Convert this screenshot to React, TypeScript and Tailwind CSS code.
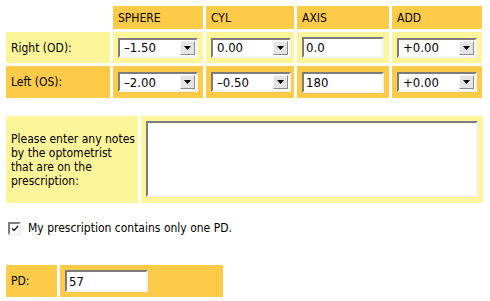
import React, { useState } from 'react';

const font = "font-['DejaVu_Sans_Condensed','DejaVu_Sans',sans-serif]";

function FakeSelect({ value }: { value: string }) {
  return (
    <div className="flex h-[20px] w-[80px] items-center border-2 border-t-[#7c7c7c] border-l-[#7c7c7c] border-b-[#f2f2f2] border-r-[#f2f2f2] bg-white">
      <span className="flex-1 pl-[4px] text-[13px] leading-none text-black">{value}</span>
      <span className="mr-[1px] flex h-[14px] w-[15px] items-center justify-center border border-t-[#f4f4f4] border-l-[#f4f4f4] border-b-[#8a8a8a] border-r-[#8a8a8a] bg-[#e4e4e4]">
        <svg width="7" height="4" viewBox="0 0 7 4">
          <path d="M0 0h7L3.5 4z" fill="#000" />
        </svg>
      </span>
    </div>
  );
}

function FakeInput({ value, w, h = 21 }: { value: string; w: number; h?: number }) {
  return (
    <input
      defaultValue={value}
      style={{ width: w, height: h }}
      className="border-2 border-t-[#7c7c7c] border-l-[#7c7c7c] border-b-[#f2f2f2] border-r-[#f2f2f2] bg-white px-[2px] text-[13px] text-black outline-none"
    />
  );
}

export default function App() {
  const [onePd, setOnePd] = useState(true);
  const heads = ['SPHERE', 'CYL', 'AXIS', 'ADD'];

  return (
    <div className={`${font} min-h-[301px] w-[490px] bg-white pl-[6px] pt-[6px] text-[12px] text-black`}>
      <div className="grid grid-cols-[104px_90px_88px_92px_90px] grid-rows-[23px_31px_32px] gap-[3px]">
        <div />
        {heads.map(h => (
          <div key={h} className="flex items-center bg-[#fecb48] pl-[5px]">{h}</div>
        ))}

        <div className="flex items-center bg-[#fcf59a] pl-[5px]">Right (OD):</div>
        <div className="flex items-center bg-[#fcf59a] pl-[5px]"><FakeSelect value="–1.50" /></div>
        <div className="flex items-center bg-[#fcf59a] pl-[5px]"><FakeSelect value="0.00" /></div>
        <div className="flex items-center bg-[#fcf59a] pl-[5px]"><FakeInput value="0.0" w={82} /></div>
        <div className="flex items-center bg-[#fcf59a] pl-[5px]"><FakeSelect value="+0.00" /></div>

        <div className="flex items-center bg-[#fecb48] pl-[5px]">Left (OS):</div>
        <div className="flex items-center bg-[#fecb48] pl-[5px]"><FakeSelect value="–2.00" /></div>
        <div className="flex items-center bg-[#fecb48] pl-[5px]"><FakeSelect value="–0.50" /></div>
        <div className="flex items-center bg-[#fecb48] pl-[5px]"><FakeInput value="180" w={82} /></div>
        <div className="flex items-center bg-[#fecb48] pl-[5px]"><FakeSelect value="+0.00" /></div>
      </div>

      <div className="mt-[18px] grid h-[87px] grid-cols-[132px_342px] gap-[3px]">
        <div className="flex items-center bg-[#fcf59a] pl-[5px] leading-[14px]">
          Please enter any notes<br />by the optometrist<br />that are on the<br />prescription:
        </div>
        <div className="bg-[#fcf59a] p-[5px] pb-[6px]">
          <textarea className="block h-full w-[332px] resize-none border-2 border-t-[#7c7c7c] border-l-[#7c7c7c] border-b-[#f2f2f2] border-r-[#f2f2f2] bg-white outline-none" />
        </div>
      </div>

      <label className="mt-[16px] ml-[2px] flex items-center gap-[7px]" onClick={() => setOnePd(!onePd)}>
        <span className="flex h-[13px] w-[13px] items-center justify-center border-2 border-t-[#7c7c7c] border-l-[#7c7c7c] border-b-[#f2f2f2] border-r-[#f2f2f2] bg-white">
          {onePd && (
            <svg width="8" height="7" viewBox="0 0 8 7">
              <path d="M1 3.5l2 2L7 1" stroke="#000" strokeWidth="1.2" fill="none" />
            </svg>
          )}
        </span>
        <span>My prescription contains only one PD.</span>
      </label>

      <div className="mt-[28px] grid h-[32px] grid-cols-[51px_163px] gap-[3px]">
        <div className="flex items-center bg-[#fecb48] pl-[5px]">PD:</div>
        <div className="flex items-center bg-[#fecb48] pl-[5px]"><FakeInput value="57" w={83} h={22} /></div>
      </div>
    </div>
  );
}
